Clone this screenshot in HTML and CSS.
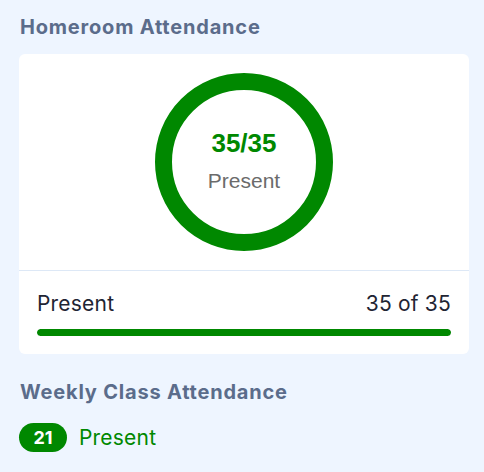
FILE: index.html
```html
<!DOCTYPE html>
<html lang="en">
<head>
<meta charset="utf-8">
<title>Attendance</title>
<link rel="stylesheet" href="styles.css">
</head>
<body>
<main class="wrap">
  <h2 class="section-title">Homeroom Attendance</h2>
  <section class="card">
    <div class="ring-area">
      <div class="ring">
        <svg class="ring-svg" width="178" height="178" viewBox="0 0 178 178" aria-hidden="true">
          <circle cx="89" cy="89" r="80.5" fill="none" stroke="#008800" stroke-width="17"/>
        </svg>
        <div class="ring-label">
          <span class="ring-count">35/35</span>
          <span class="ring-sub">Present</span>
        </div>
      </div>
    </div>
    <div class="summary">
      <div class="summary-row">
        <span>Present</span>
        <span>35 of 35</span>
      </div>
      <div class="bar"><div class="bar-fill" style="width:100%"></div></div>
    </div>
  </section>
  <h2 class="section-title weekly-title">Weekly Class Attendance</h2>
  <div class="weekly">
    <span class="badge">21</span>
    <span class="weekly-label">Present</span>
  </div>
</main>
</body>
</html>
```
FILE: styles.css
```css
html, body {
  margin: 0;
  padding: 0;
}
body {
  background: #eef5ff;
  font-family: Inter, "Noto Sans", sans-serif;
  width: 484px;
  height: 472px;
  overflow: hidden;
}
.wrap {
  padding: 15px 15px 0 19px;
}
.section-title {
  margin: 0;
  font-size: 20px;
  line-height: 24px;
  font-weight: 700;
  letter-spacing: 0.8px;
  color: #5b6c8b;
  padding-left: 1px;
}
.card {
  margin-top: 15px;
  background: #ffffff;
  border-radius: 6px;
  width: 450px;
}
.ring-area {
  display: flex;
  justify-content: center;
  padding: 19px 0;
}
.ring {
  position: relative;
  width: 178px;
  height: 178px;
}
.ring-svg {
  display: block;
}
.ring-label {
  position: absolute;
  inset: 0;
  display: flex;
  flex-direction: column;
  align-items: center;
  justify-content: center;
  gap: 10px;
  padding-bottom: 2px;
  font-family: "Liberation Sans", Arial, sans-serif;
}
.ring-count {
  font-size: 26px;
  line-height: 30px;
  font-weight: 700;
  color: #008800;
}
.ring-sub {
  font-size: 21px;
  line-height: 26px;
  color: #6b6b6b;
}
.summary {
  border-top: 1px solid #dde8f6;
  padding: 21px 18px 18px;
}
.summary-row {
  display: flex;
  justify-content: space-between;
  font-size: 21px;
  line-height: 24px;
  letter-spacing: 0.2px;
  color: #1f2533;
}
.bar {
  margin-top: 13px;
  height: 7px;
  border-radius: 4px;
  background: #e5e7eb;
  overflow: hidden;
}
.bar-fill {
  height: 100%;
  background: #008800;
  border-radius: 4px;
}
.weekly-title {
  margin-top: 26px;
}
.weekly {
  margin-top: 19px;
  display: flex;
  align-items: center;
  gap: 12px;
}
.badge {
  display: inline-flex;
  align-items: center;
  justify-content: center;
  width: 48px;
  height: 29px;
  border-radius: 15px;
  background: #008800;
  color: #ffffff;
  font-size: 18px;
  font-weight: 700;
}
.weekly-label {
  font-size: 21px;
  line-height: 24px;
  letter-spacing: 0.2px;
  color: #008800;
}
```
